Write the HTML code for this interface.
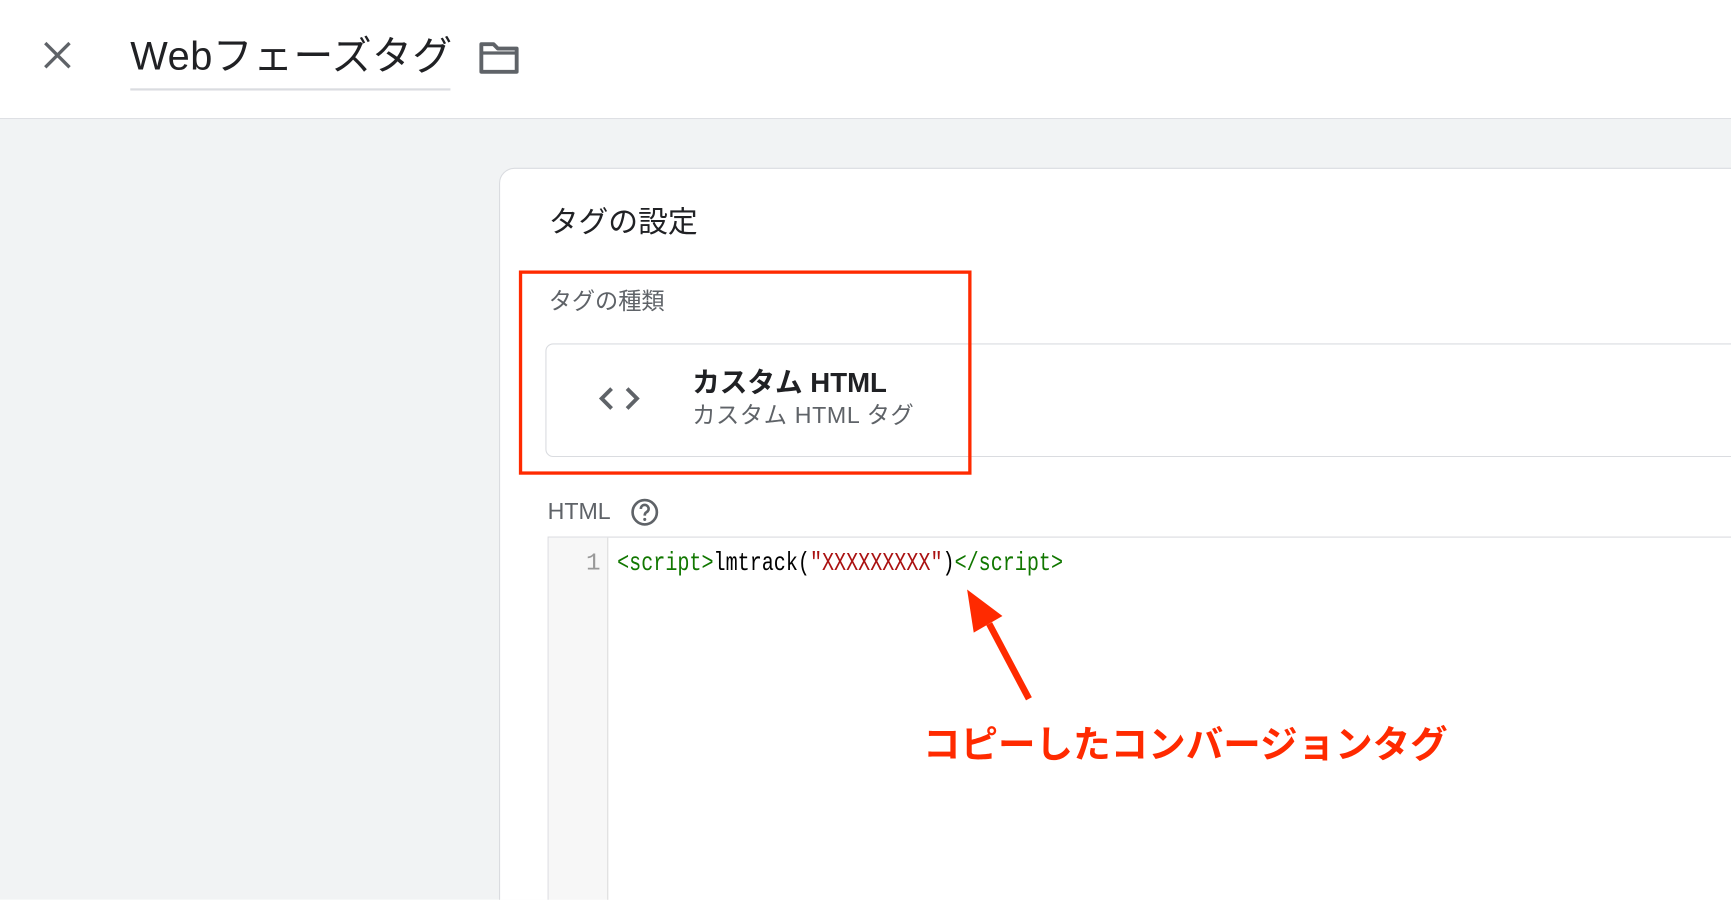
<!DOCTYPE html>
<html><head><meta charset="utf-8"><style>
html,body{margin:0;padding:0;width:1731px;height:899px;overflow:hidden;background:#fff;}
#w{position:absolute;left:0;top:0;width:1568px;height:815px;overflow:hidden;transform:scale(1.104);transform-origin:0 0;font-family:"Liberation Sans","Noto Sans CJK JP",sans-serif;}
.a{position:absolute;white-space:nowrap;}
</style></head><body><div id="w">
<div class="a" style="left:0;top:0;width:1568px;height:107px;background:#fff;border-bottom:1px solid #dadce0"></div>
<div class="a" style="left:0;top:108px;width:1568px;height:707px;background:#f1f3f4"></div>
<svg class="a" style="left:38px;top:36px" width="28" height="28" viewBox="0 0 28 28"><path d="M3 3L25 25M25 3L3 25" stroke="#5f6368" stroke-width="3"/></svg>
<div class="a" style="left:118px;top:29px;font-size:36px;letter-spacing:0.5px;color:#202124;line-height:44px">Webフェーズタグ</div>
<div class="a" style="left:118px;top:80px;width:290px;height:2px;background:#dadce0"></div>
<svg class="a" style="left:433px;top:36px" width="38" height="32" viewBox="0 0 38 32"><path d="M3 4h11l4 4h17v21H3z" fill="none" stroke="#5f6368" stroke-width="3.5" stroke-linejoin="round"/><path d="M3 12h32" stroke="#5f6368" stroke-width="3"/></svg>
<div class="a" style="left:452px;top:152px;width:1130px;height:700px;background:#fff;border:1px solid #dadce0;border-radius:14px"></div>
<div class="a" style="left:497px;top:184px;font-size:27px;color:#202124;line-height:34px">タグの設定</div>
<div class="a" style="left:497px;top:261px;font-size:21px;color:#5f6368;line-height:26px">タグの種類</div>
<div class="a" style="left:494px;top:311px;width:1100px;height:101px;border:1px solid #dadce0;border-radius:7px;background:#fff"></div>
<svg class="a" style="left:541px;top:346px" width="40" height="30" viewBox="0 0 40 30"><path d="M13 6L4 15l9 9M27 6l9 9-9 9" fill="none" stroke="#5f6368" stroke-width="3.5"/></svg>
<div class="a" style="left:627px;top:332px;font-size:25px;font-weight:bold;color:#202124;line-height:30px">カスタム HTML</div>
<div class="a" style="left:627px;top:364px;font-size:21px;letter-spacing:0.6px;color:#5f6368;line-height:26px">カスタム HTML タグ</div>
<div class="a" style="left:470px;top:245px;width:404px;height:179px;border:3px solid #ff2a00"></div>
<div class="a" style="left:496px;top:451px;font-size:21px;color:#5f6368;line-height:26px">HTML</div>
<svg class="a" style="left:571px;top:451px" width="26" height="26" viewBox="0 0 26 26"><circle cx="13" cy="13" r="11" fill="none" stroke="#5f6368" stroke-width="2.4"/><path d="M9.5 10a3.5 3.5 0 1 1 5 3c-1.3.7-1.5 1.5-1.5 3" fill="none" stroke="#5f6368" stroke-width="2.4"/><circle cx="13" cy="19.5" r="1.4" fill="#5f6368"/></svg>
<div class="a" style="left:496px;top:486px;width:1100px;height:360px;border:1px solid #dadce0;background:#fff"></div>
<div class="a" style="left:497px;top:487px;width:53px;height:360px;background:#f7f7f7;border-right:1px solid #ddd"></div>
<div class="a" style="left:520px;top:497px;width:24px;text-align:right;font-family:'Liberation Mono',monospace;font-size:22px;color:#999;line-height:28px">1</div>
<div class="a" style="left:559px;top:497px;font-family:'Liberation Mono',monospace;font-size:18.2px;line-height:28px;transform:scaleY(1.3);transform-origin:0 50%"><span style="color:#170">&lt;script&gt;</span><span style="color:#000">lmtrack(</span><span style="color:#a11">"XXXXXXXXX"</span><span style="color:#000">)</span><span style="color:#170">&lt;/script&gt;</span></div>
<svg class="a" style="left:860px;top:525px" width="90" height="115" viewBox="0 0 90 115"><path d="M72 108L36 40" stroke="#ff2a00" stroke-width="6"/><path d="M16 9L48 33 22 48z" fill="#ff2a00"/></svg>
<div class="a" style="left:836px;top:654px;font-size:34px;font-weight:bold;color:#ff2a00;line-height:42px">コピーしたコンバージョンタグ</div>
</div></body></html>
